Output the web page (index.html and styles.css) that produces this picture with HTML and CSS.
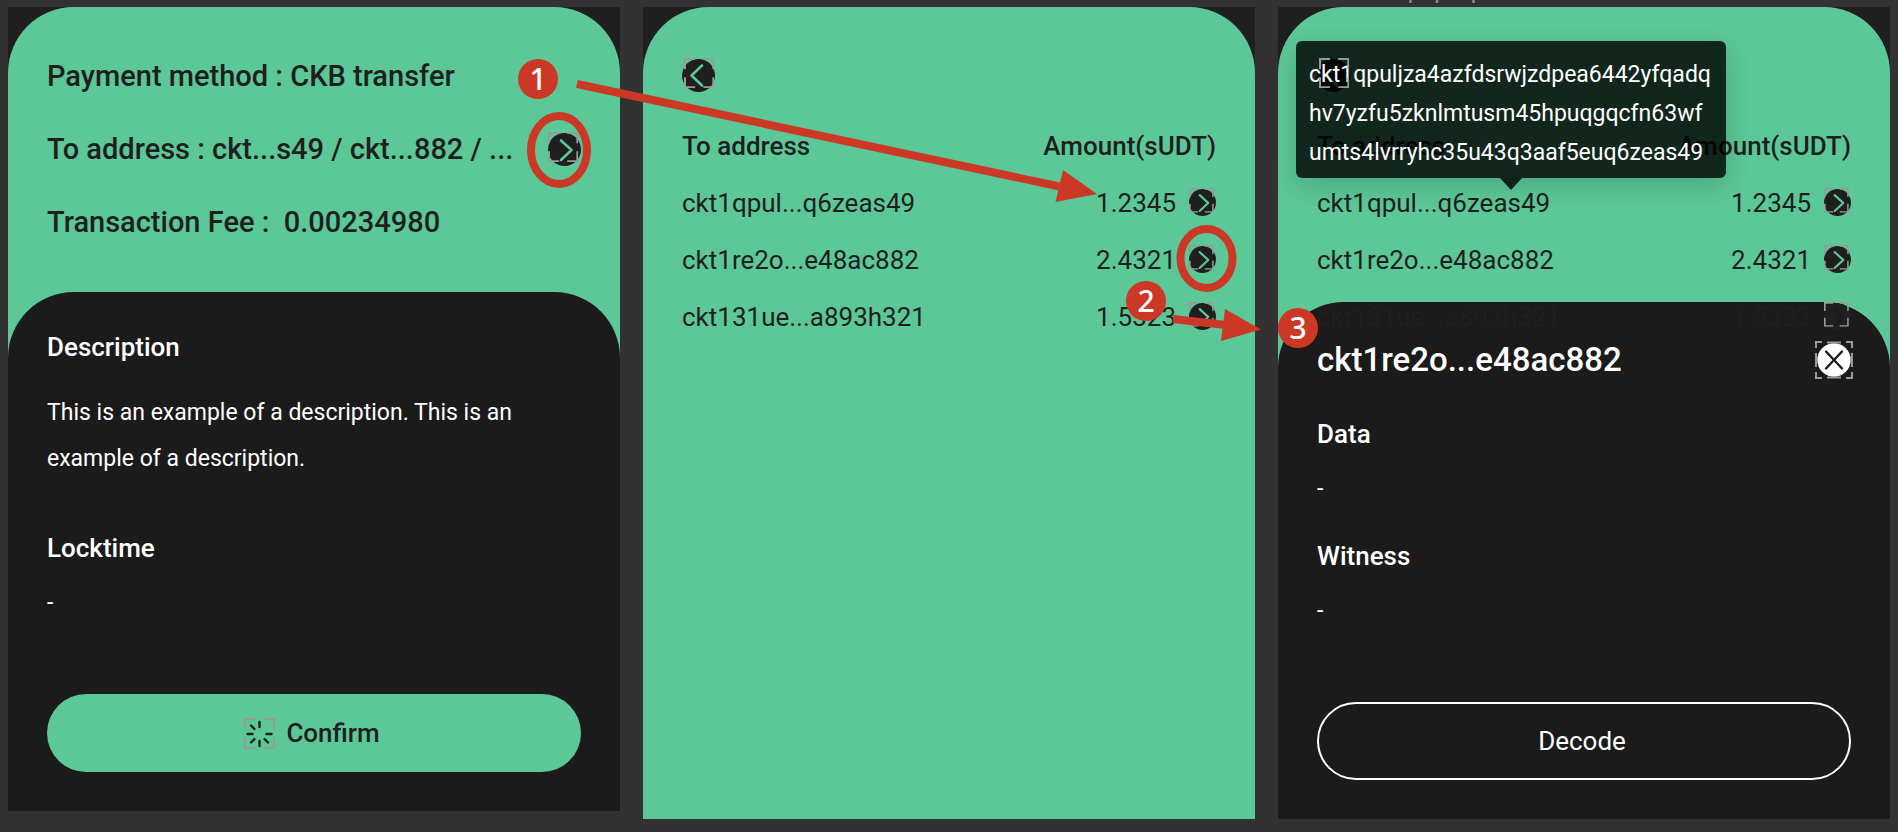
FILE: index.html
```html
<!DOCTYPE html>
<html lang="en">
<head>
<meta charset="utf-8">
<title>Payment flow</title>
<link rel="stylesheet" href="styles.css">
</head>
<body>
<svg class="defs" aria-hidden="true">
  <defs>
    <symbol id="next" viewBox="0 0 33 33"><circle cx="16.500" cy="16.500" r="16.500" fill="#1f1f1f"/><path d="M13 7.500 23.500 17 13 27" fill="none" stroke="currentColor" stroke-width="2.600" stroke-linecap="round" stroke-linejoin="round"/></symbol>
    <symbol id="back" viewBox="0 0 33 33"><circle cx="16.500" cy="16.500" r="16.500" fill="#1f1f1f"/><path d="M20 6.500 9.500 16.500 20 26.500" fill="none" stroke="currentColor" stroke-width="2.600" stroke-linecap="round" stroke-linejoin="round"/></symbol>
    <symbol id="frame" viewBox="0 0 30 30"><path d="M1 11V1H11M19 1H29V11M29 19V29H19M11 29H1V19" fill="none" stroke="#999" stroke-width="2"/></symbol>
  </defs>
</svg>
<main class="board">
  <section class="phone phone-short">
    <div class="card">
      <div class="summary">
        <p class="line">Payment method : CKB transfer</p>
        <p class="line line-link">To address : ckt...s49 / ckt...882 / ...
          <button class="icon icon-lg" aria-label="Show addresses"><svg class="glyph"><use href="#next"/></svg><svg class="frame"><use href="#frame"/></svg></button>
        </p>
        <p class="line">Transaction Fee :&nbsp; 0.00234980</p>
      </div>
      <div class="sheet">
        <h2 class="label">Description</h2>
        <p class="text text-para">This is an example of a description. This is an example of a description.</p>
        <h2 class="label label-gap">Locktime</h2>
        <p class="text">-</p>
        <button class="action action-fill">
          <svg class="spinner" viewBox="0 0 31 31"><path d="M1 11.500V1H11.500M19.500 1H30V11.500M30 19.500V30H19.500M11.500 30H1V19.500" fill="none" stroke="#999" stroke-width="2"/><path d="M15.500 4v5M15.500 23v5M3.500 16h5M22.500 16h5M7 7.500l3.500 3.500M7 24.500l3.500-3.500M24 24.500l-3.500-3.500" fill="none" stroke="#1f1f1f" stroke-width="2.400" stroke-linecap="round"/></svg>
          Confirm
        </button>
      </div>
    </div>
    <span class="badge badge-one">1</span>
  </section>

  <section class="phone">
    <div class="card">
      <div class="listing">
        <button class="icon icon-lg icon-back" aria-label="Back"><svg class="glyph"><use href="#back"/></svg><svg class="frame"><use href="#frame"/></svg></button>
        <table class="amounts">
          <thead><tr><th>To address</th><th class="num">Amount(sUDT)</th></tr></thead>
          <tbody>
            <tr><td>ckt1qpul...q6zeas49</td><td class="num"><span class="cell">1.2345 <button class="icon" aria-label="Details"><svg class="glyph"><use href="#next"/></svg><svg class="frame"><use href="#frame"/></svg></button></span></td></tr>
            <tr><td>ckt1re2o...e48ac882</td><td class="num"><span class="cell">2.4321 <button class="icon" aria-label="Details"><svg class="glyph"><use href="#next"/></svg><svg class="frame"><use href="#frame"/></svg></button></span></td></tr>
            <tr><td>ckt131ue...a893h321</td><td class="num"><span class="cell">1.5323 <button class="icon" aria-label="Details"><svg class="glyph"><use href="#next"/></svg><svg class="frame"><use href="#frame"/></svg></button></span></td></tr>
          </tbody>
        </table>
      </div>
    </div>
    <span class="badge badge-two">2</span>
  </section>

  <section class="phone">
    <div class="card">
      <div class="listing">
        <button class="icon icon-lg icon-back" aria-label="Back"><svg class="glyph"><use href="#back"/></svg><svg class="frame"><use href="#frame"/></svg></button>
        <table class="amounts">
          <thead><tr><th>To address</th><th class="num">Amount(sUDT)</th></tr></thead>
          <tbody>
            <tr><td>ckt1qpul...q6zeas49</td><td class="num"><span class="cell">1.2345 <button class="icon" aria-label="Details"><svg class="glyph"><use href="#next"/></svg><svg class="frame"><use href="#frame"/></svg></button></span></td></tr>
            <tr><td>ckt1re2o...e48ac882</td><td class="num"><span class="cell">2.4321 <button class="icon" aria-label="Details"><svg class="glyph"><use href="#next"/></svg><svg class="frame"><use href="#frame"/></svg></button></span></td></tr>
            <tr class="covered"><td>ckt131ue...a893h321</td><td class="num"><span class="cell">1.5323 <button class="icon" aria-label="Details"><svg class="glyph"><use href="#next"/></svg><svg class="frame"><use href="#frame"/></svg></button></span></td></tr>
          </tbody>
        </table>
      </div>
      <div class="sheet sheet-over">
        <div class="sheet-head">
          <h1 class="title">ckt1re2o...e48ac882</h1>
          <button class="close" aria-label="Close">
            <svg class="close-glyph" viewBox="0 0 38 38"><circle cx="19" cy="19" r="16.700" fill="#fff"/><path d="M11 10.500 27 27.500M27 10.500 11 27.500" stroke="#1b1b1b" stroke-width="2.400" stroke-linecap="round"/><path d="M1 7V1H7M12 1.500H26M31 1H37V7M37 12V26M37 31V37H31M26 36.500H12M7 37H1V31M1 26V12" fill="none" stroke="#999" stroke-width="2"/></svg>
          </button>
        </div>
        <h2 class="label label-data">Data</h2>
        <p class="text">-</p>
        <h2 class="label label-witness">Witness</h2>
        <p class="text">-</p>
        <button class="action action-line">Decode</button>
      </div>
    </div>
    <div class="tooltip" role="tooltip">ckt1qpuljza4azfdsrwjzdpea6442yfqadq<br>hv7yzfu5zknlmtusm45hpuqgqcfn63wf<br>umts4lvrryhc35u43q3aaf5euq6zeas49</div>
    <span class="badge badge-three">3</span>
  </section>

  <svg class="marks" viewBox="0 0 1898 832" aria-hidden="true">
    <path d="M1410.500 0v3M1437 0v3M1473.500 0v3" stroke="#8c8c8c" stroke-width="2.500"/>
    <g fill="none" stroke="#cb3825" stroke-width="8">
      <ellipse cx="559" cy="150" rx="28" ry="34"/>
      <ellipse cx="1206.500" cy="258.500" rx="26" ry="29.500"/>
      <path d="M577 84 1062 187M1173 319 1226 325"/>
    </g>
    <path d="M1063 170 1097 194 1055.500 202ZM1225 309 1261 329.500 1221 341Z" fill="#cb3825"/>
  </svg>
</main>
</body>
</html>
```
FILE: styles.css
```css
* { box-sizing: border-box; margin: 0; padding: 0; }

body {
  background: #323232;
  color: #1f1f1f;
  font-family: Roboto, "Liberation Sans", sans-serif;
  font-size: 26px;
}

button { background: none; border: 0; color: inherit; font: inherit; cursor: pointer; }

.defs { position: absolute; width: 0; height: 0; }

.board {
  position: relative;
  display: grid;
  grid-template-columns: repeat(3, 1fr);
  gap: 23px;
  padding: 7px 8px 13px;
}

.phone { position: relative; background: #1f1f1f; }
.phone-short { align-self: start; }

.card {
  display: flex;
  flex-direction: column;
  height: 100%;
  border-radius: 66px 66px 0 0;
  background: #5cc797;
}

.summary { padding: 33px 39px; font-size: 29px; font-weight: 500; }
.line { line-height: 73px; white-space: nowrap; }
.line-link { display: flex; align-items: center; justify-content: space-between; }

.icon {
  position: relative;
  flex: none;
  display: block;
  width: 27px;
  height: 27px;
  color: #5cc797;
}
.icon-lg { width: 33px; height: 33px; }
.glyph { display: block; width: 100%; height: 100%; }
.frame {
  position: absolute;
  z-index: 4;
  top: -1px;
  left: 0;
  width: 92%;
  height: 92%;
}
.icon-back .frame { left: 2px; }

.sheet {
  padding: 32px 39px 39px;
  border-radius: 66px 66px 0 0;
  background: #1b1b1b;
  color: #fff;
}
.sheet-over { position: relative; z-index: 1; margin-top: -43px; padding-top: 35px; }

.label { font-size: 26px; font-weight: 500; line-height: 46px; }
.label-gap { margin-top: 43px; }
.label-data { margin-top: 28px; }
.label-witness { margin-top: 21px; }
.text { margin-top: 9px; font-size: 23px; line-height: 46px; }
.text-para { margin-top: 20px; }

.action {
  display: flex;
  align-items: center;
  justify-content: center;
  gap: 11px;
  width: 100%;
  height: 78px;
  margin-top: 68px;
  padding-right: 4px;
  border-radius: 39px;
}
.action-fill { background: #5cc797; color: #1f1f1f; font-weight: 500; }
.action-line { border: 2px solid #fff; }
.spinner { width: 31px; height: 31px; }

.listing { padding: 52px 39px 0; }

.amounts { width: 100%; margin-top: 25px; border-collapse: collapse; }
.amounts th, .amounts td { height: 57px; text-align: left; vertical-align: middle; }
.amounts th { font-weight: 500; }
.amounts .num { text-align: right; }
.cell { display: flex; align-items: center; justify-content: flex-end; gap: 13px; }
.covered { position: relative; z-index: 2; }
.covered .icon { color: #1b1b1b; }

.sheet-head { display: flex; align-items: center; justify-content: space-between; height: 46px; }
.title { font-size: 33px; font-weight: 500; line-height: 46px; }
.close { width: 38px; height: 38px; margin-right: -2px; }
.close-glyph { display: block; }

.tooltip {
  position: absolute;
  z-index: 3;
  top: 34px;
  left: 18px;
  padding: 14px 15px 6px 13px;
  border-radius: 6px;
  background: rgba(0, 0, 0, 0.81);
  box-shadow: 0 8px 26px rgba(0, 0, 0, 0.16);
  color: #fff;
  font-size: 23px;
  line-height: 39px;
  white-space: nowrap;
}
.tooltip::after {
  content: "";
  position: absolute;
  top: 100%;
  left: 50%;
  margin-left: -11px;
  border: 11px solid transparent;
  border-top: 12px solid rgba(0, 0, 0, 0.81);
  border-bottom: 0;
}

.badge {
  position: absolute;
  z-index: 6;
  width: 40px;
  height: 40px;
  border-radius: 50%;
  background: #cb3825;
  color: #fff;
  font-family: "Noto Sans", sans-serif;
  font-size: 30px;
  font-weight: 500;
  line-height: 40px;
  text-align: center;
}
.badge-one { top: 52px; right: 62px; }
.badge-two { top: 274px; right: 89px; }
.badge-three { top: 301px; left: 0; }

.marks {
  position: absolute;
  z-index: 5;
  top: 0;
  left: 0;
  width: 100%;
  pointer-events: none;
}
```
